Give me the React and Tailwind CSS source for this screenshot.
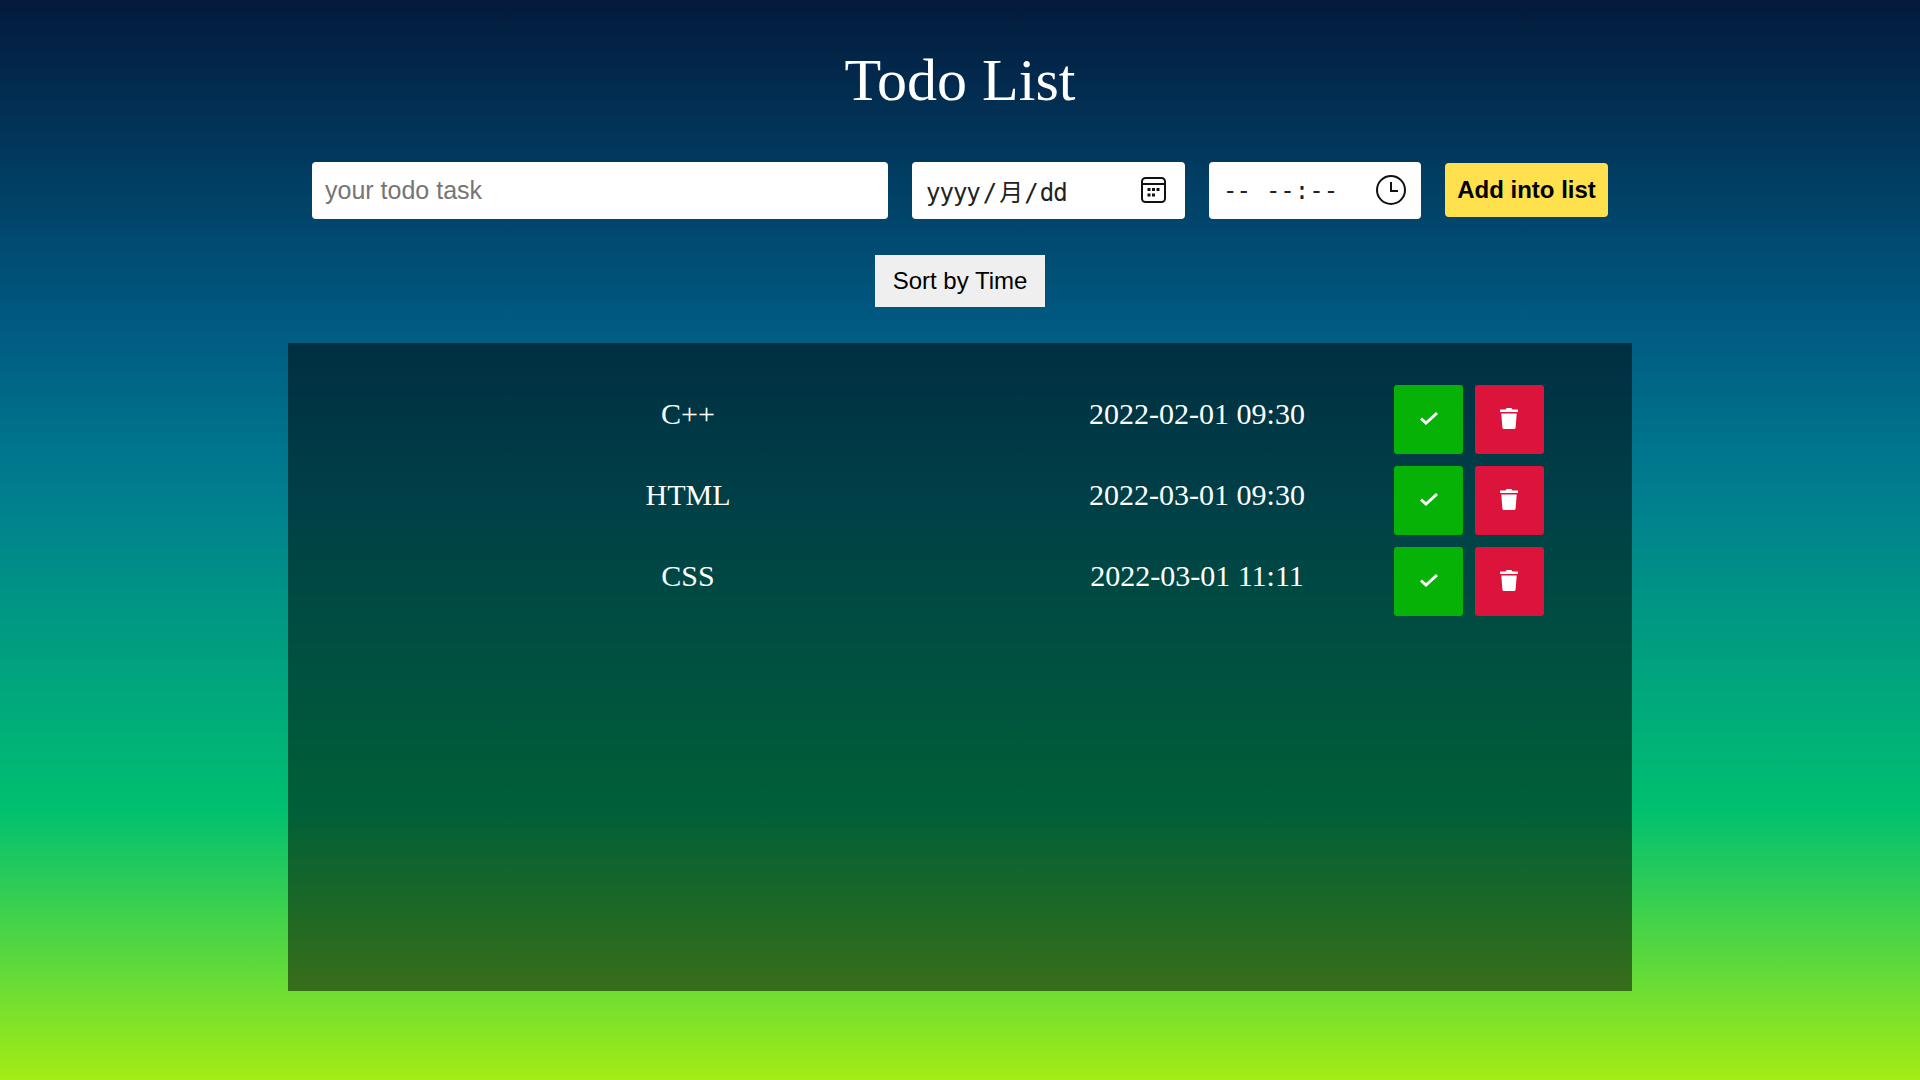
import React from 'react';

const todos = [
    { task: 'C++', time: '2022-02-01 09:30' },
    { task: 'HTML', time: '2022-03-01 09:30' },
    { task: 'CSS', time: '2022-03-01 11:11' }
];

const CalendarIcon = () => (
    <svg className="mb-[2px]" width="25" height="26" viewBox="0 0 25 26" fill="none" stroke="#111" strokeWidth="2">
        <rect x="1" y="1" width="23" height="24" rx="3.5" />
        <path d="M1 7h23" />
        <g fill="#111" stroke="none">
            <rect x="6.5" y="11" width="3" height="3" />
            <rect x="11" y="11" width="3" height="3" />
            <rect x="15.5" y="11" width="3" height="3" />
            <rect x="6.5" y="16.5" width="3" height="3" />
            <rect x="11" y="16.5" width="3" height="3" />
        </g>
    </svg>
);

const ClockIcon = () => (
    <svg className="mb-[2px]" width="30" height="30" viewBox="0 0 30 30" fill="none" stroke="#111" strokeWidth="2">
        <circle cx="15" cy="15" r="14" />
        <path d="M15 7v9h7" />
    </svg>
);

const CheckIcon = () => (
    <svg width="18" height="14" viewBox="0 0 18 14" fill="none" stroke="#fff" strokeWidth="3">
        <path d="M1 7.5l5 4.5L17 2" />
    </svg>
);

const TrashIcon = () => (
    <svg width="18" height="21" viewBox="0 0 18 21" fill="#fff">
        <path d="M6.5 0h5l.8 1.6H18V4H0V1.6h5.7z" />
        <path d="M1.3 5.4h15.4L15.6 19.4A1.8 1.8 0 0 1 13.8 21H4.2a1.8 1.8 0 0 1-1.8-1.6z" />
    </svg>
);

const TodoRow = ({ task, time }) => (
    <div className="flex items-start h-[81px]">
        <div className="w-[500px] ml-[150px] pt-[9px] text-center text-[30px] leading-[40px]">{task}</div>
        <div className="w-[330px] ml-[94px] pt-[9px] text-center text-[30px] leading-[40px]">{time}</div>
        <div className="flex gap-3 ml-[32px]">
            <button className="w-[69px] h-[69px] pb-[3px] rounded-[3px] bg-[#06b206] flex items-center justify-center">
                <CheckIcon />
            </button>
            <button className="w-[69px] h-[69px] pb-[2px] pr-[1px] rounded-[3px] bg-[#dc143c] flex items-center justify-center">
                <TrashIcon />
            </button>
        </div>
    </div>
);

const App = () => {
    return (
        <div className="w-full h-[1080px] overflow-hidden bg-[linear-gradient(to_bottom,#031a3c_0%,#005a82_30%,#007f8f_46%,#00c070_75%,#a4ec14_100%)] font-['Liberation_Serif',serif]">
            <h1 className="pt-[45px] h-[162px] text-center text-white text-[60px] leading-[70px]">Todo List</h1>
            <div className="flex justify-center items-start gap-6 font-['Liberation_Sans',sans-serif]">
                <input
                    type="text"
                    placeholder="your todo task"
                    className="w-[576px] h-[57px] px-[13px] bg-white rounded text-[25px] outline-none placeholder:text-[#757575]"
                />
                <div className="w-[273px] h-[57px] pl-[14px] pr-[19px] bg-white rounded flex items-center justify-between">
                    <span className="pt-[5px] flex text-[24px] text-[#222] font-['DejaVu_Sans_Mono','Noto_Sans_CJK_SC',monospace] tracking-[-1px]">
                        <span>yyyy</span>
                        <span className="mx-[3px]">/</span>
                        <span>月</span>
                        <span className="mx-[2px]">/</span>
                        <span>dd</span>
                    </span>
                    <CalendarIcon />
                </div>
                <div className="w-[212px] h-[57px] pl-[14px] pr-[15px] bg-white rounded flex items-center justify-between">
                    <span className="flex text-[24px] text-[#222] font-['DejaVu_Sans_Mono',monospace] tracking-[-1px]">
                        <span>--</span>
                        <span className="ml-[16px] tracking-[0px]">--:--</span>
                    </span>
                    <ClockIcon />
                </div>
                <button className="w-[163px] h-[54px] mt-[1px] bg-[#ffe14d] rounded text-[24px] font-bold text-black">Add into list</button>
            </div>
            <div className="flex justify-center mt-[36px]">
                <button className="w-[170px] h-[52px] bg-[#efefef] text-[24px] text-black font-['Liberation_Sans',sans-serif]">Sort by Time</button>
            </div>
            <div className="w-[1344px] h-[648px] mx-auto mt-[36px] pt-[42px] bg-black/50 text-white">
                {todos.map(todo => (
                    <TodoRow key={todo.task} task={todo.task} time={todo.time} />
                ))}
            </div>
        </div>
    );
};

export default App;
